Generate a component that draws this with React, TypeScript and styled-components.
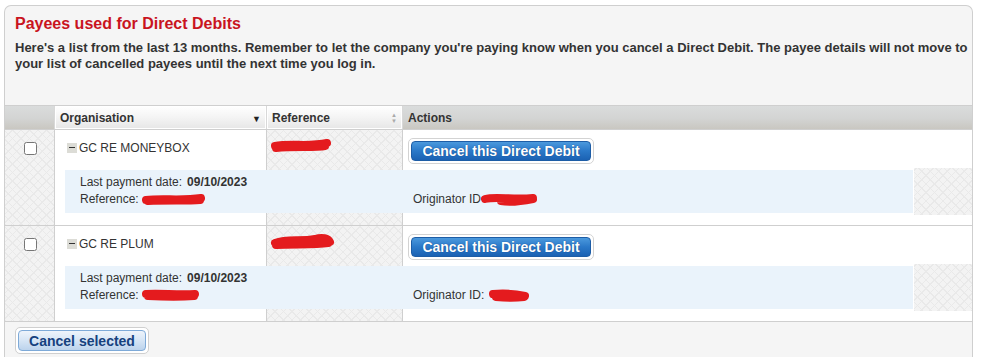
import styled, { createGlobalStyle } from "styled-components";

const GlobalStyle = createGlobalStyle`
  html, body {
    margin: 0;
    padding: 0;
    background: #ffffff;
    font-family: "Liberation Sans", Arial, sans-serif;
    color: #333;
  }
`;

const hatch = `
  background-color: #f3f3f3;
  background-image:
    repeating-linear-gradient(45deg, #e9e9e9 0 1px, transparent 1px 6px),
    repeating-linear-gradient(-45deg, #e9e9e9 0 1px, transparent 1px 6px);
`;

const Panel = styled.section`
  box-sizing: border-box;
  width: 969px;
  height: 360px;
  margin: 5px 0 0 4px;
  background: #f5f5f5;
  border: 1px solid #cfcfcf;
  border-bottom: none;
  border-radius: 7px 7px 0 0;
  overflow: hidden;
  display: flex;
  flex-direction: column;
`;

const Intro = styled.div`
  padding: 9px 10px 0 10px;
  height: 99px;
  box-sizing: border-box;
`;

const Title = styled.h2`
  margin: 0 0 7px 0;
  font-size: 16px;
  line-height: 18px;
  font-weight: bold;
  color: #c9141e;
`;

const Lead = styled.p`
  margin: 0;
  font-size: 13px;
  line-height: 16px;
  font-weight: bold;
  color: #333;
  white-space: nowrap;
`;

const Cols = "50px 212px 136px 1fr";

const HeaderRow = styled.div`
  display: grid;
  grid-template-columns: ${Cols};
  height: 23px;
  border-top: 1px solid #cfcfcf;
  border-bottom: 1px solid #cfcfcf;
`;

const HeadCell = styled.div<{ $sortable?: boolean }>`
  box-sizing: border-box;
  display: flex;
  align-items: center;
  justify-content: space-between;
  padding: 0 5px 0 5px;
  font-size: 12px;
  font-weight: bold;
  color: #333;
  border-right: 1px solid #d8d8d8;
  background: ${(p) =>
    p.$sortable
      ? "linear-gradient(#ffffff, #f4f4f4 50%, #e6e6e6)"
      : "linear-gradient(#dadcdc, #d3d4d3 55%, #c9c7c1)"};
  ${(p) => (p.$sortable ? "box-shadow: inset 0 0 0 1px #ffffff;" : "")}
  &:last-child {
    border-right: none;
  }
`;

const SortDown = styled.span`
  font-size: 9px;
  color: #222;
  margin-top: 2px;
`;

const SortBoth = styled.span`
  display: flex;
  flex-direction: column;
  font-size: 6px;
  line-height: 6px;
  color: #aaa;
`;

const Row = styled.div`
  display: grid;
  grid-template-columns: ${Cols};
  grid-template-rows: 38px 47px 10px;
  border-bottom: 1px solid #cfcfcf;
  background: #ffffff;
`;

const ColBg = styled.div<{ $col: number; $hatched?: boolean }>`
  grid-column: ${(p) => p.$col};
  grid-row: 1 / 4;
  border-right: ${(p) => (p.$col < 4 ? "1px solid #cfcfcf" : "none")};
  ${(p) => (p.$hatched ? hatch : "background: #ffffff;")}
`;

const CheckCell = styled.div`
  grid-column: 1;
  grid-row: 1 / 3;
  display: flex;
  justify-content: center;
  padding-top: 12px;
  box-sizing: border-box;
`;

const Check = styled.input`
  width: 13px;
  height: 13px;
  margin: 0;
  accent-color: #555;
`;

const OrgCell = styled.div`
  grid-column: 2;
  grid-row: 1;
  display: flex;
  align-items: center;
  gap: 2px;
  padding: 0 0 3px 12px;
  font-size: 12px;
  color: #333;
`;

const Toggle = styled.span`
  width: 10px;
  height: 10px;
  background: #dcdcd6;
  display: flex;
  align-items: center;
  justify-content: center;
  &::after {
    content: "";
    width: 6px;
    height: 1px;
    background: #333;
  }
`;

const RefCell = styled.div`
  grid-column: 3;
  grid-row: 1;
  padding: 7px 0 0 3px;
`;

const ActionCell = styled.div`
  grid-column: 4;
  grid-row: 1;
  padding: 8px 0 0 5px;
`;

const ButtonFrame = styled.span<{ $light?: boolean }>`
  display: inline-flex;
  padding: 2px;
  background: #ffffff;
  border: 1px solid ${(p) => (p.$light ? "#cfcfcf" : "#d3d3d3")};
  border-radius: 5px;
`;

const BlueButton = styled.button`
  font-family: "Liberation Sans", Arial, sans-serif;
  font-size: 14px;
  font-weight: bold;
  color: #ffffff;
  height: 20px;
  width: 180px;
  padding: 0;
  border: 1px solid #1d5da6;
  border-radius: 4px;
  background: linear-gradient(#4b99dd, #2a78c8 50%, #1b62b3);
  text-shadow: 0 0 1px #0a3a7a;
`;

const PaleButton = styled.button`
  font-family: "Liberation Sans", Arial, sans-serif;
  font-size: 14px;
  font-weight: bold;
  color: #16417e;
  height: 21px;
  width: 128px;
  padding: 0;
  border: 1px solid #7eaad8;
  border-radius: 4px;
  background: linear-gradient(#eef4fb, #d6e5f5 50%, #bcd3ec);
`;

const Detail = styled.div`
  grid-column: 2 / 5;
  grid-row: 2;
  display: grid;
  grid-template-columns: 1fr 58px;
  gap: 1px;
  padding-left: 10px;
`;

const DetailBox = styled.div`
  margin: 2px 0;
  background: #eaf3fb;
  padding: 3px 0 0 15px;
  display: grid;
  grid-template-columns: 333px 1fr;
  grid-template-rows: 17px 17px;
  font-size: 12px;
  color: #333;
`;

const DetailLine = styled.div<{ $col?: number; $row?: number }>`
  grid-column: ${(p) => p.$col ?? 1};
  grid-row: ${(p) => p.$row ?? 1};
  display: flex;
  align-items: center;
  white-space: nowrap;
`;

const Strong = styled.b`
  margin-left: 5px;
`;

const Hatched = styled.div`
  ${hatch}
`;

const Footer = styled.div`
  flex: 1;
  background: #f5f5f5;
  padding: 5px 10px;
`;

function Scribble({ w, h, d }: { w: number; h: number; d: string }) {
  return (
    <svg width={w} height={h} viewBox={`0 0 ${w} ${h}`} style={{ display: "block" }}>
      <path d={d} fill="none" stroke="#e41b1e" strokeWidth={8} strokeLinecap="round" strokeLinejoin="round" />
    </svg>
  );
}

type Mark = { w: number; h: number; d: string };

type Payee = {
  name: string;
  ref: Mark;
  detailRef: Mark;
  orig: Mark;
  colon: boolean;
};

const payees: Payee[] = [
  {
    name: "GC RE MONEYBOX",
    ref: { w: 62, h: 16, d: "M5 9 C20 6, 40 10, 57 6 M6 11 C25 9, 45 11, 55 9" },
    detailRef: { w: 64, h: 12, d: "M4 7 C20 5, 40 8, 59 5 M6 8 C25 7, 45 8, 58 7" },
    orig: { w: 58, h: 14, d: "M4 7 C15 4, 30 8, 52 6 M20 9 C30 11, 42 9, 52 7" },
    colon: false,
  },
  {
    name: "GC RE PLUM",
    ref: { w: 66, h: 18, d: "M5 10 C18 5, 30 9, 45 6 C52 4, 58 5, 60 9 M6 12 C25 11, 45 12, 58 10" },
    detailRef: { w: 58, h: 14, d: "M4 6 C18 5, 35 7, 53 6 M6 8 C25 9, 40 9, 52 8" },
    orig: { w: 42, h: 14, d: "M5 6 C15 5, 28 6, 37 8 M8 9 C18 10, 28 10, 36 9" },
    colon: true,
  },
];

export default function App() {
  return (
    <>
      <GlobalStyle />
      <Panel>
        <Intro>
          <Title>Payees used for Direct Debits</Title>
          <Lead>
            Here's a list from the last 13 months. Remember to let the company you're paying know when you cancel a
            Direct Debit. The payee details will not move to
            <br />
            your list of cancelled payees until the next time you log in.
          </Lead>
        </Intro>

        <HeaderRow>
          <HeadCell />
          <HeadCell $sortable>
            Organisation
            <SortDown>▼</SortDown>
          </HeadCell>
          <HeadCell $sortable>
            Reference
            <SortBoth>
              <span>▲</span>
              <span>▼</span>
            </SortBoth>
          </HeadCell>
          <HeadCell>Actions</HeadCell>
        </HeaderRow>

        {payees.map((p) => (
          <Row key={p.name}>
            <ColBg $col={1} $hatched />
            <ColBg $col={2} />
            <ColBg $col={3} $hatched />
            <ColBg $col={4} />
            <CheckCell>
              <Check type="checkbox" />
            </CheckCell>
            <OrgCell>
              <Toggle />
              {p.name}
            </OrgCell>
            <RefCell>
              <Scribble {...p.ref} />
            </RefCell>
            <ActionCell>
              <ButtonFrame>
                <BlueButton>Cancel this Direct Debit</BlueButton>
              </ButtonFrame>
            </ActionCell>
            <Detail>
              <DetailBox>
                <DetailLine>
                  Last payment date:<Strong>09/10/2023</Strong>
                </DetailLine>
                <DetailLine $row={2}>
                  Reference:&nbsp;
                  <Scribble {...p.detailRef} />
                </DetailLine>
                <DetailLine $col={2} $row={2}>
                  {p.colon ? "Originator ID:\u00a0" : "Originator ID"}
                  <Scribble {...p.orig} />
                </DetailLine>
              </DetailBox>
              <Hatched />
            </Detail>
          </Row>
        ))}

        <Footer>
          <ButtonFrame $light>
            <PaleButton>Cancel selected</PaleButton>
          </ButtonFrame>
        </Footer>
      </Panel>
    </>
  );
}
